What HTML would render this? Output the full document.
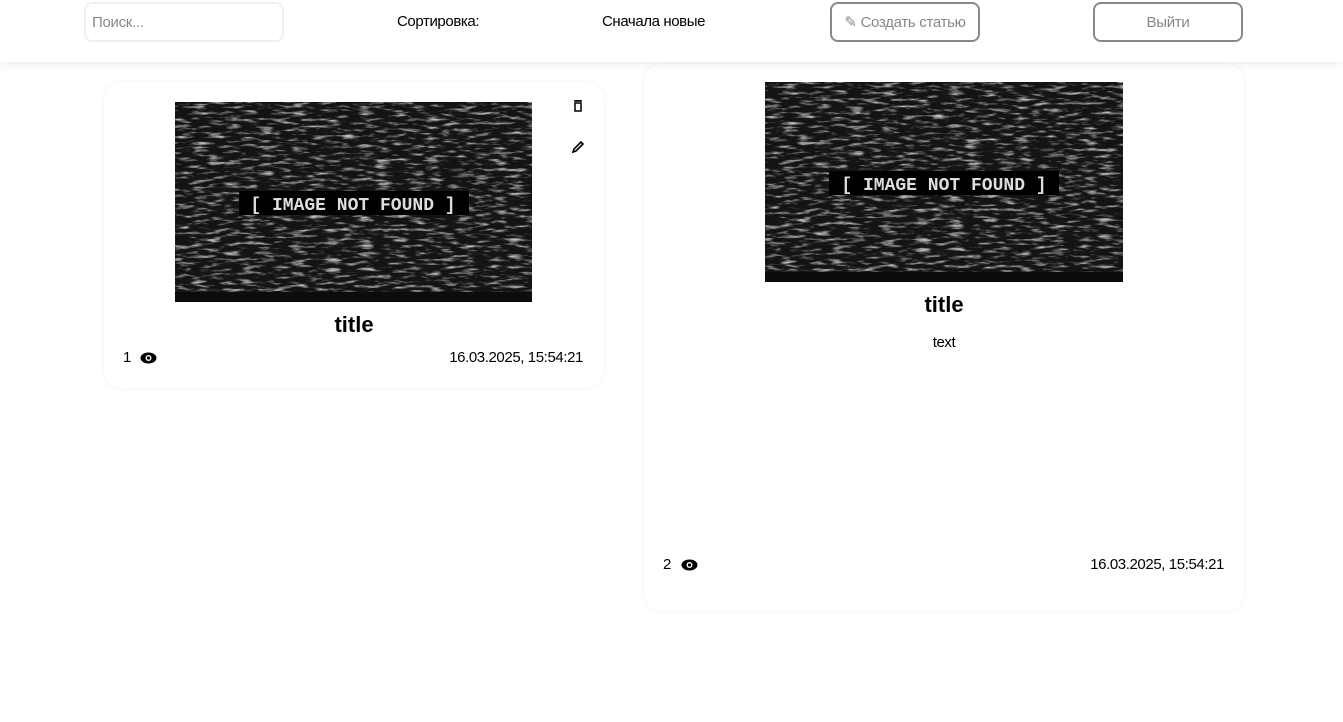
<!DOCTYPE html>
<html><head><meta charset="utf-8"><style>
*{box-sizing:border-box;margin:0;padding:0}
body{width:1343px;height:722px;background:#fff;font-family:"Liberation Sans",sans-serif;position:relative;overflow:hidden;color:#000}
.hdr{position:absolute;left:0;top:0;width:1343px;height:62px;background:#fff;box-shadow:0 2px 8px rgba(0,0,0,.08);z-index:2}
.abs{position:absolute}
.inp{left:84px;top:2px;width:200px;height:40px;border:2px solid #eee;border-radius:8px;color:#888;font-size:15px;padding:10px 6px;letter-spacing:-0.3px}
.btn{border:2px solid #888;border-radius:8px;color:#888;font-size:15px;display:flex;align-items:center;justify-content:center;height:40px;top:2px;letter-spacing:-0.3px}
.card{position:absolute;background:#fff;border-radius:18px;box-shadow:0 0 6px rgba(0,0,0,.06)}
.img{position:absolute;background:#1a1a1a}
.img svg{display:block}
.t{position:absolute;font-weight:bold;font-size:22px;width:100%;text-align:center}
.s{font-size:15px;position:absolute;letter-spacing:-0.4px}
</style></head><body>
<svg width="0" height="0" style="position:absolute"><defs>
<filter id="n" x="0" y="0" width="100%" height="100%"><feTurbulence type="fractalNoise" baseFrequency="0.06 0.3" numOctaves="3" seed="5"/><feColorMatrix type="matrix" values="0 0 0 0 0.5 0 0 0 0 0.5 0 0 0 0 0.5 0 0 0 3 -1.5"/></filter>
</defs></svg>
<div class="hdr">
<div class="abs inp">Поиск...</div>
<div class="abs s" style="left:397px;top:13px">Сортировка:</div>
<div class="abs s" style="left:602px;top:13px">Сначала новые</div>
<div class="abs btn" style="left:830px;width:150px">✎&nbsp;Создать статью</div>
<div class="abs btn" style="left:1093px;width:150px">Выйти</div>
</div>
<div class="card" style="left:104px;top:82px;width:500px;height:306px">
<div class="img" style="left:71px;top:20px;width:357px;height:200px"><svg width="357" height="200"><rect width="357" height="200" fill="#141414"/><rect width="357" height="200" filter="url(#n)"/><rect x="0" y="190" width="357" height="10" fill="#0c0c0c"/><rect x="64" y="89" width="230" height="24" fill="#000"/><text x="178" y="108" text-anchor="middle" fill="#ddd" font-family="Liberation Mono" font-size="18" font-weight="bold">[ IMAGE NOT FOUND ]</text></svg></div>
<svg class="abs" style="left:469px;top:18px" width="10" height="12" viewBox="0 0 10 12"><path d="M1 1h8M3 1V0h4v1M2 3h6v8H2z" fill="none" stroke="#000" stroke-width="1.5"/></svg>
<svg class="abs" style="left:467px;top:58px" width="14" height="14" viewBox="0 0 14 14"><path d="M2 12l1-3 7-7 2 2-7 7z" fill="none" stroke="#000" stroke-width="1.6"/></svg>
<div class="t" style="top:230px">title</div>
<div class="s" style="left:19px;top:267px">1</div>
<svg class="abs" style="left:36px;top:270px" width="17" height="12" viewBox="0 0 17 12"><ellipse cx="8.5" cy="6" rx="8" ry="5.5" fill="#000"/><circle cx="8.5" cy="6" r="3" fill="#fff"/><circle cx="8.5" cy="6" r="1.6" fill="#000"/></svg>
<div class="s" style="right:21px;top:267px">16.03.2025, 15:54:21</div>
</div>
<div class="card" style="left:644px;top:64px;width:600px;height:547px">
<div class="img" style="left:121px;top:18px;width:358px;height:200px"><svg width="358" height="200"><rect width="358" height="200" fill="#141414"/><rect width="358" height="200" filter="url(#n)"/><rect x="0" y="190" width="358" height="10" fill="#0c0c0c"/><rect x="64" y="89" width="230" height="24" fill="#000"/><text x="179" y="108" text-anchor="middle" fill="#ddd" font-family="Liberation Mono" font-size="18" font-weight="bold">[ IMAGE NOT FOUND ]</text></svg></div>
<div class="t" style="top:228px">title</div>
<div class="s" style="top:270px;width:100%;text-align:center">text</div>
<div class="s" style="left:19px;top:492px">2</div>
<svg class="abs" style="left:37px;top:495px" width="17" height="12" viewBox="0 0 17 12"><ellipse cx="8.5" cy="6" rx="8" ry="5.5" fill="#000"/><circle cx="8.5" cy="6" r="3" fill="#fff"/><circle cx="8.5" cy="6" r="1.6" fill="#000"/></svg>
<div class="s" style="right:20px;top:492px">16.03.2025, 15:54:21</div>
</div>
</body></html>
